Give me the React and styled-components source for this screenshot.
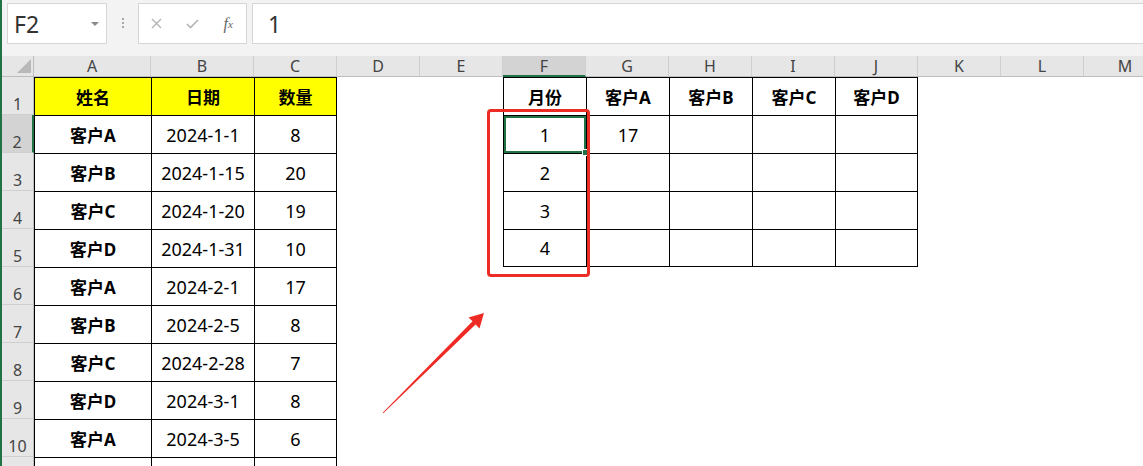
import React from "react";
import styled, { createGlobalStyle } from "styled-components";

const GlobalStyle = createGlobalStyle`
  body {
    margin: 0;
    background: #fff;
    font-family: "Noto Sans", "Noto Sans CJK SC", sans-serif;
  }
`;

const COLS = [
  { id: "A", w: 117 },
  { id: "B", w: 103 },
  { id: "C", w: 83 },
  { id: "D", w: 83 },
  { id: "E", w: 83 },
  { id: "F", w: 83 },
  { id: "G", w: 83 },
  { id: "H", w: 83 },
  { id: "I", w: 83 },
  { id: "J", w: 83 },
  { id: "K", w: 83 },
  { id: "L", w: 83 },
  { id: "M", w: 83 },
];

// sheet content, keyed by column
const ROWS = [
  { A: "姓名", B: "日期", C: "数量", F: "月份", G: "客户A", H: "客户B", I: "客户C", J: "客户D" },
  { A: "客户A", B: "2024-1-1", C: "8", F: "1", G: "17" },
  { A: "客户B", B: "2024-1-15", C: "20", F: "2" },
  { A: "客户C", B: "2024-1-20", C: "19", F: "3" },
  { A: "客户D", B: "2024-1-31", C: "10", F: "4" },
  { A: "客户A", B: "2024-2-1", C: "17" },
  { A: "客户B", B: "2024-2-5", C: "8" },
  { A: "客户C", B: "2024-2-28", C: "7" },
  { A: "客户D", B: "2024-3-1", C: "8" },
  { A: "客户A", B: "2024-3-5", C: "6" },
  {},
];

// bordered ranges: columns and last row
const TABLES = [
  { cols: ["A", "B", "C"], lastRow: 99 },
  { cols: ["F", "G", "H", "I", "J"], lastRow: 5 },
];

const Page = styled.div`
  position: relative;
  width: 1143px;
  height: 466px;
  overflow: hidden;
  box-sizing: border-box;
  border-left: 2px solid #217346;
  display: flex;
  flex-direction: column;
`;

const TopBar = styled.div`
  height: 56px;
  flex: none;
  box-sizing: border-box;
  padding: 3px 0 0 5px;
  background: #f3f3f3;
  display: flex;
  align-items: flex-start;
`;

const NameBox = styled.div`
  width: 100px;
  height: 41px;
  box-sizing: border-box;
  background: #fff;
  border: 1px solid #d6d6d6;
  display: flex;
  align-items: center;
  justify-content: space-between;
  padding: 0 7px 0 6px;
  font-size: 23px;
  color: #333;
`;

const Caret = styled.span`
  width: 0;
  height: 0;
  border-left: 4px solid transparent;
  border-right: 4px solid transparent;
  border-top: 4px solid #8a8a8a;
`;

const Grip = styled.div`
  width: 31px;
  height: 41px;
  display: flex;
  align-items: center;
  justify-content: center;
  &::before {
    content: "";
    width: 2px;
    height: 12px;
    background: repeating-linear-gradient(#a8a8a8 0 2px, transparent 2px 4px);
  }
`;

const FxBox = styled.div`
  width: 109px;
  height: 41px;
  box-sizing: border-box;
  background: #fff;
  border: 1px solid #d6d6d6;
  display: flex;
  align-items: center;
`;

const IconSlot = styled.div`
  width: 36px;
  display: flex;
  justify-content: center;
  align-items: center;
  color: ${(p) => p.$color || "#b4b4b4"};
  font-family: "Liberation Serif", serif;
  font-style: italic;
  font-size: 16px;
  sub {
    font-size: 11px;
    vertical-align: -1px;
  }
`;

const FormulaInput = styled.div`
  flex: 1;
  height: 41px;
  margin-left: 5px;
  box-sizing: border-box;
  background: #fff;
  border: 1px solid #d6d6d6;
  border-right: none;
  display: flex;
  align-items: center;
  padding-left: 15px;
  font-size: 23px;
  color: #333;
`;

const Sheet = styled.div`
  display: grid;
  grid-template-columns: 32px ${COLS.map((c) => c.w + "px").join(" ")};
  grid-template-rows: 21px repeat(${ROWS.length}, 38px);
`;

const Corner = styled.div`
  position: relative;
  background: #e6e6e6;
  border-right: 1px solid #bdbdbd;
  border-bottom: 1px solid #bdbdbd;
  &::after {
    content: "";
    position: absolute;
    right: 2px;
    bottom: 3px;
    width: 0;
    height: 0;
    border-left: 14px solid transparent;
    border-bottom: 14px solid #b9b9b9;
  }
`;

const ColHead = styled.div`
  box-sizing: border-box;
  background: ${(p) => (p.$active ? "#d3d3d3" : "#e6e6e6")};
  border-right: 1px solid #cfcfcf;
  border-bottom: ${(p) => (p.$active ? "2px solid #217346" : "1px solid #bdbdbd")};
  display: flex;
  align-items: center;
  justify-content: center;
  font-size: 16px;
  color: #444;
`;

const RowHead = styled.div`
  box-sizing: border-box;
  background: ${(p) => (p.$active ? "#d3d3d3" : "#e6e6e6")};
  border-bottom: 1px solid #cfcfcf;
  border-right: ${(p) => (p.$active ? "2px solid #217346" : "1px solid #bdbdbd")};
  display: flex;
  align-items: flex-end;
  justify-content: center;
  padding-bottom: 1px;
  font-size: 16px;
  line-height: 18px;
  color: #444;
`;

const line = "1px solid #000";

const Cell = styled.div`
  position: relative;
  box-sizing: border-box;
  background: ${(p) => p.$fill || "#fff"};
  border-left: ${(p) => (p.$boxed ? line : "none")};
  border-top: ${(p) => (p.$boxed ? line : "none")};
  border-right: ${(p) => (p.$endCol ? line : "none")};
  border-bottom: ${(p) => (p.$endRow ? line : "none")};
  display: flex;
  align-items: center;
  justify-content: center;
  font-size: ${(p) => (p.$bold ? "17px" : "18px")};
  font-weight: ${(p) => (p.$bold ? 700 : 400)};
  color: #000;
  ${(p) =>
    p.$selected &&
    `
    box-shadow: inset 0 0 0 2px #217346;
    &::after {
      content: "";
      position: absolute;
      right: -3px;
      bottom: -3px;
      width: 5px;
      height: 5px;
      background: #217346;
      border: 1px solid #fff;
      z-index: 2;
    }
  `}
`;

const RedBox = styled.div`
  position: absolute;
  left: 485px;
  top: 109px;
  width: 103px;
  height: 168px;
  box-sizing: border-box;
  border: 3px solid #ec2c25;
  border-radius: 4px;
  z-index: 3;
`;

const Arrow = styled.svg`
  position: absolute;
  left: 0;
  top: 0;
  z-index: 3;
`;

function Spreadsheet() {
  return (
    <Sheet>
      <Corner />
      {COLS.map((c) => (
        <ColHead key={c.id} $active={c.id === "F"}>
          {c.id}
        </ColHead>
      ))}
      {ROWS.map((row, i) => {
        const n = i + 1;
        return (
          <React.Fragment key={n}>
            <RowHead $active={n === 2}>{n < ROWS.length ? n : ""}</RowHead>
            {COLS.map((c) => {
              const t = TABLES.find((tb) => tb.cols.includes(c.id) && n <= tb.lastRow);
              return (
                <Cell
                  key={c.id}
                  $boxed={!!t}
                  $endCol={t && t.cols[t.cols.length - 1] === c.id}
                  $endRow={t && t.lastRow === n}
                  $fill={n === 1 && t && c.id <= "C" ? "#ffff00" : null}
                  $bold={n === 1 || c.id === "A"}
                  $selected={c.id === "F" && n === 2}
                >
                  {row[c.id]}
                </Cell>
              );
            })}
          </React.Fragment>
        );
      })}
    </Sheet>
  );
}

export default function App() {
  return (
    <>
      <GlobalStyle />
      <Page>
        <TopBar>
          <NameBox>
            F2
            <Caret />
          </NameBox>
          <Grip />
          <FxBox>
            <IconSlot>
              <svg width="11" height="11" viewBox="0 0 11 11">
                <path d="M1 1 L10 10 M10 1 L1 10" stroke="currentColor" strokeWidth="1.4" />
              </svg>
            </IconSlot>
            <IconSlot>
              <svg width="13" height="10" viewBox="0 0 13 10">
                <path d="M1 5 L4.5 8.5 L12 1" stroke="currentColor" strokeWidth="1.6" fill="none" />
              </svg>
            </IconSlot>
            <IconSlot $color="#666">
              f<sub>x</sub>
            </IconSlot>
          </FxBox>
          <FormulaInput>1</FormulaInput>
        </TopBar>
        <Spreadsheet />
        <RedBox />
        <Arrow width="1141" height="466" viewBox="2 0 1141 466">
          <polygon
            points="484,313 479.5,328.5 475.6,324.4 383.3,413.3 382.7,412.7 472.5,321.3 468.5,317.5"
            fill="#ee2a24"
          />
        </Arrow>
      </Page>
    </>
  );
}
